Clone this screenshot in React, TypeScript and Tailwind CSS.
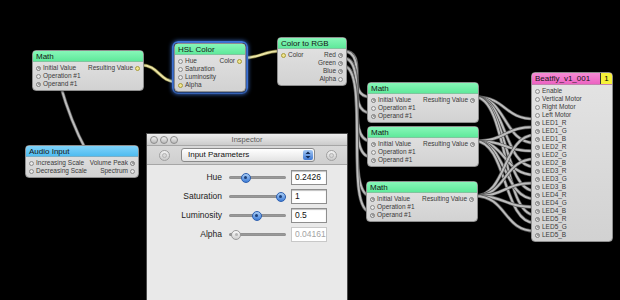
import type { ReactNode } from "react";

const FONT = { fontFamily: '"Liberation Sans", Arial, sans-serif' };

type PortKind = "open" | "on" | "yellow";

function Port({ kind = "open" }: { kind?: PortKind }) {
  if (kind === "yellow")
    return <span className="inline-block w-[5px] h-[5px] rounded-full border border-[#a79b3c] bg-[#efe48e] shrink-0" />;
  if (kind === "on")
    return (
      <span className="flex items-center justify-center w-[5px] h-[5px] rounded-full border border-[#7d7d7d] bg-[#e4e4e4] shrink-0">
        <span className="w-[2px] h-[2px] rounded-full bg-[#8a8a8a]" />
      </span>
    );
  return <span className="inline-block w-[5px] h-[5px] rounded-full border border-[#8c8c8c] bg-[#e6e6e6] shrink-0" />;
}

type Pin = { label: string; kind?: PortKind };

function Node({
  title,
  pos,
  header,
  inputs,
  outputs = [],
  badge,
}: {
  title: string;
  pos: string;
  header: string;
  inputs: Pin[];
  outputs?: Pin[];
  badge?: ReactNode;
}) {
  const rows = Math.max(inputs.length, outputs.length);
  return (
    <div
      className={`absolute ${pos} rounded-[4px] border border-[#8e8e8e] bg-gradient-to-b from-[#e4e4e4] to-[#d2d2d2] shadow-[0_1px_2px_rgba(0,0,0,0.6)] overflow-hidden`}
    >
      <div className={`flex items-center h-[11px] ${header} border-b border-[#7a7a7a]/40`}>
        <span className="flex-1 pl-[3px] text-[8px] leading-[11px] text-[#151515] truncate">{title}</span>
        {badge}
      </div>
      <div className="flex flex-col pt-[2px] pb-[2px]">
        {Array.from({ length: rows }).map((_, i) => (
          <div key={i} className="flex items-center justify-between h-[8px] px-[3px] text-[6.5px] leading-[8px] text-[#3a3a3a]">
            <span className="flex items-center gap-[2px]">
              {inputs[i] && (
                <>
                  <Port kind={inputs[i].kind} />
                  <span>{inputs[i].label}</span>
                </>
              )}
            </span>
            <span className="flex items-center gap-[2px]">
              {outputs[i] && (
                <>
                  <span>{outputs[i].label}</span>
                  <Port kind={outputs[i].kind} />
                </>
              )}
            </span>
          </div>
        ))}
      </div>
    </div>
  );
}

function bez(x1: number, y1: number, x2: number, y2: number, k: number) {
  return `M${x1},${y1} C${x1 + k},${y1} ${x2 - k},${y2} ${x2},${y2}`;
}

function Cable({ d, yellow }: { d: string; yellow?: boolean }) {
  return (
    <g fill="none" strokeLinecap="round">
      <path d={d} stroke={yellow ? "#6f6a35" : "#555"} strokeWidth={3.4} />
      <path d={d} stroke={yellow ? "#ece5a4" : "#bdbdbd"} strokeWidth={2} />
    </g>
  );
}

function Cables() {
  const mathY = [97, 141, 196];
  const outs = [51, 58, 66];
  const cables: string[] = [];
  mathY.forEach((y, i) => {
    cables.push(bez(343, outs[i], 371, y, 28));
    cables.push(bez(343, outs[i], 371, y + 16, 28));
  });
  mathY.forEach((y, i) => {
    for (let led = 0; led < 5; led++) {
      const row = 4 + led * 3 + i;
      cables.push(bez(475, y, 535, 87 + row * 8, 32));
    }
  });
  return (
    <svg className="absolute inset-0" width={620} height={300}>
      <Cable d="M60,84 C66,105 74,128 86,150" />
      {cables.map((d, i) => (
        <Cable key={i} d={d} />
      ))}
      <Cable yellow d={bez(141, 65, 177, 82, 18)} />
      <Cable yellow d={bez(243, 58, 281, 51, 18)} />
    </svg>
  );
}

const MATH_IN: Pin[] = [
  { label: "Initial Value", kind: "on" },
  { label: "Operation #1" },
  { label: "Operand #1", kind: "on" },
];

const LEDS = ["1", "2", "3", "4", "5"].flatMap((n) => ["R", "G", "B"].map((c) => `LED${n}_${c}`));

function Slider({ value, disabled }: { value: number; disabled?: boolean }) {
  return (
    <div className="relative w-[57px] h-[10px] ml-[7px] flex items-center">
      <div className="w-full h-[3px] rounded-full bg-gradient-to-b from-[#7a7a7a] to-[#b9b9b9] border border-[#8a8a8a]/50" />
      <div
        className={`absolute top-[0px] w-[10px] h-[10px] -ml-[5px] rounded-full border flex items-center justify-center ${
          disabled
            ? "border-[#9a9a9a] bg-gradient-to-b from-[#fafafa] to-[#d0d0d0]"
            : "border-[#2c5fb0] bg-gradient-to-b from-[#a9cdf6] to-[#3f7dd6]"
        }`}
        style={{ left: `${value * 100}%` }}
      >
        <span className={`w-[3px] h-[3px] rounded-full ${disabled ? "bg-[#b5b5b5]" : "bg-[#1d3f78]"}`} />
      </div>
    </div>
  );
}

function ParamRow({ label, value, pos, disabled }: { label: string; value: string; pos: number; disabled?: boolean }) {
  return (
    <div className="flex items-center h-[19px]">
      <span className="w-[75px] text-right text-[8.5px] text-[#1c1c1c]">{label}</span>
      <Slider value={pos} disabled={disabled} />
      <div
        className={`ml-[5px] w-[36px] h-[15px] bg-white border flex items-center pl-[3px] text-[8.5px] ${
          disabled ? "border-[#c8c8c8] text-[#a4a4a4]" : "border-[#8e8e8e] text-[#111] shadow-[inset_0_1px_1px_rgba(0,0,0,0.25)]"
        }`}
      >
        {value}
      </div>
    </div>
  );
}

function RoundBtn() {
  return (
    <span className="flex items-center justify-center w-[11px] h-[11px] rounded-full border border-[#a0a0a0] bg-gradient-to-b from-[#f2f2f2] to-[#cacaca]">
      <span className="w-[5px] h-[5px] rounded-full bg-[#d8d8d8] border border-[#b4b4b4]" />
    </span>
  );
}

function Inspector() {
  return (
    <div className="absolute left-[146px] top-[133px] w-[202px] h-[167px] flex flex-col bg-[#e9e9e9] border-x border-t border-[#4a4a4a] shadow-[0_0_6px_rgba(0,0,0,0.8)]">
      <div className="grid grid-cols-[1fr_auto_1fr] items-center h-[11px] bg-gradient-to-b from-[#eeeeee] to-[#cbcbcb]">
        <div className="flex gap-[2px] pl-[3px]">
          {[0, 1, 2].map((i) => (
            <span key={i} className="w-[8px] h-[8px] rounded-full border border-[#8c8c8c] bg-gradient-to-b from-[#f0f0f0] to-[#b9b9b9]" />
          ))}
        </div>
        <span className="text-[7.5px] leading-[11px] text-[#5a5a5a]">Inspector</span>
        <span />
      </div>
      <div className="flex items-center h-[20px] pl-[12px] bg-gradient-to-b from-[#d9d9d9] to-[#cfcfcf] border-y border-[#a6a6a6]">
        <RoundBtn />
        <div className="ml-[11px] w-[134px] h-[14px] rounded-[3px] border border-[#8a8a8a] bg-gradient-to-b from-white to-[#e3e3e3] flex items-center pl-[6px] pr-[1px]">
          <span className="flex-1 text-[8px] text-[#111]">Input Parameters</span>
          <span className="flex items-center justify-center w-[10px] h-[10px] rounded-[2px] bg-gradient-to-b from-[#a6c9f3] to-[#3e78d3]">
            <svg width="6" height="8" viewBox="0 0 6 8">
              <path d="M3 0.5 L5.5 3 H0.5 Z M3 7.5 L5.5 5 H0.5 Z" fill="#102a55" />
            </svg>
          </span>
        </div>
        <span className="ml-[11px]">
          <RoundBtn />
        </span>
      </div>
      <div className="flex flex-col pt-[3px]">
        <ParamRow label="Hue" value="0.2426" pos={0.29} />
        <ParamRow label="Saturation" value="1" pos={0.91} />
        <ParamRow label="Luminosity" value="0.5" pos={0.49} />
        <ParamRow label="Alpha" value="0.04161" pos={0.13} disabled />
      </div>
    </div>
  );
}

export default function App() {
  return (
    <div className="relative w-[620px] h-[300px] bg-black overflow-hidden" style={FONT}>
      <Cables />
      <Node
        title="Math"
        pos="left-[32px] top-[50px] w-[112px]"
        header="bg-gradient-to-b from-[#86f7b8] to-[#5fe99b]"
        inputs={MATH_IN}
        outputs={[{ label: "Resulting Value", kind: "yellow" }]}
      />
      <div className="absolute left-[172px] top-[41px] rounded-[6px] border-2 border-[#3f74d6] shadow-[0_0_4px_rgba(70,130,240,0.9)]">
        <Node
          title="HSL Color"
          pos="relative w-[72px]"
          header="bg-gradient-to-b from-[#86f7b8] to-[#5fe99b]"
          inputs={[{ label: "Hue" }, { label: "Saturation" }, { label: "Luminosity" }, { label: "Alpha", kind: "yellow" }]}
          outputs={[{ label: "Color", kind: "yellow" }]}
        />
      </div>
      <Node
        title="Color to RGB"
        pos="left-[277px] top-[37px] w-[70px]"
        header="bg-gradient-to-b from-[#86f7b8] to-[#5fe99b]"
        inputs={[{ label: "Color", kind: "yellow" }]}
        outputs={[{ label: "Red", kind: "on" }, { label: "Green", kind: "on" }, { label: "Blue", kind: "on" }, { label: "Alpha" }]}
      />
      <Node
        title="Audio Input"
        pos="left-[25px] top-[145px] w-[114px]"
        header="bg-gradient-to-b from-[#7fd3fa] to-[#4fbcf0]"
        inputs={[{ label: "Increasing Scale" }, { label: "Decreasing Scale" }]}
        outputs={[{ label: "Volume Peak", kind: "on" }, { label: "Spectrum" }]}
      />
      <Node
        title="Math"
        pos="left-[367px] top-[82px] w-[112px]"
        header="bg-gradient-to-b from-[#86f7b8] to-[#5fe99b]"
        inputs={MATH_IN}
        outputs={[{ label: "Resulting Value", kind: "on" }]}
      />
      <Node
        title="Math"
        pos="left-[367px] top-[126px] w-[112px]"
        header="bg-gradient-to-b from-[#86f7b8] to-[#5fe99b]"
        inputs={MATH_IN}
        outputs={[{ label: "Resulting Value", kind: "on" }]}
      />
      <Node
        title="Math"
        pos="left-[366px] top-[181px] w-[112px]"
        header="bg-gradient-to-b from-[#86f7b8] to-[#5fe99b]"
        inputs={MATH_IN}
        outputs={[{ label: "Resulting Value", kind: "on" }]}
      />
      <Node
        title="Beatfly_v1_001"
        pos="left-[531px] top-[72px] w-[82px]"
        header="bg-gradient-to-b from-[#f58bd4] to-[#ec62c2] h-[12px]"
        badge={
          <span className="flex items-center justify-center w-[12px] h-[11px] bg-[#f6f23a] border-l border-[#333] text-[8px] text-black">
            1
          </span>
        }
        inputs={[
          { label: "Enable" },
          { label: "Vertical Motor" },
          { label: "Right Motor" },
          { label: "Left Motor" },
          ...LEDS.map((l) => ({ label: l, kind: "on" as PortKind })),
        ]}
      />
      <Inspector />
    </div>
  );
}
